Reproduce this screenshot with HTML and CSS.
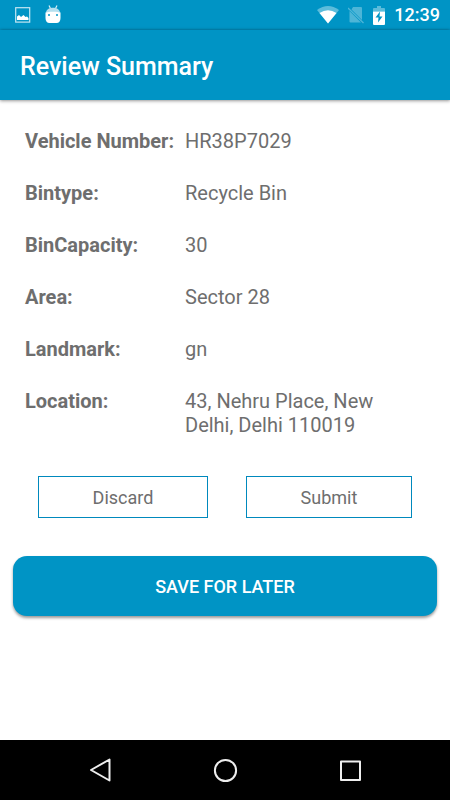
FILE: index.html
```html
<!DOCTYPE html>
<html lang="en">
<head>
    <meta charset="UTF-8">
    <meta name="viewport" content="width=device-width, initial-scale=1.0">
    <title>Review Summary</title>
    <link rel="stylesheet" href="styles.css">
</head>
<body>
    <div class="status-bar">
        <div class="status-left">
            <svg width="16" height="16" viewBox="0 0 16 16">
                <rect x="0.7" y="0.7" width="14" height="14.4" fill="none" stroke="#c4e6f2" stroke-width="1.2"/>
                <path d="M2 13V9.5L4 8l2 2 2.5-2 2 2 1.5-.5 1.5 1.5V13z" fill="#fff"/>
            </svg>
            <svg width="16" height="20" viewBox="0 0 16 20">
                <path d="M4 .5l1.500 3M12 .5l-1.500 3" stroke="#d8eff7" stroke-width="1.2"/>
                <path d="M1 7.500C1.500 4 5 2.800 8 2.800s6.500 1.200 7 4.700z" fill="#b5dfee"/>
                <path d="M.5 7.500C2 6.500 14 6.500 15.500 7.500V13c0 3-1.500 5-4 5h-7c-2.500 0-4-2-4-5z" fill="#fff"/>
                <rect x="3" y="9" width="2" height="2" fill="#3fb0d4"/>
                <rect x="11" y="9" width="2" height="2" fill="#3fb0d4"/>
            </svg>
        </div>
        <div class="status-right">
            <svg width="22" height="18" viewBox="0 0 22 18">
                <path d="M0 4Q11-4 22 4L11 17.5z" fill="#5cbcdb"/>
                <path d="M2.5 7Q11 1.500 19.5 7L11 17.5z" fill="#fff"/>
            </svg>
            <svg width="16" height="18" viewBox="0 0 16 18">
                <path d="M5 1h8q1 0 1 1v12L3.5 3.500zM1.500 5L13 16.500H2.500q-1 0-1-1z" fill="#4db5d7"/>
                <path d="M0 2l15.500 15" stroke="#4db5d7" stroke-width="1.3"/>
            </svg>
            <svg width="12" height="19" viewBox="0 0 12 19">
                <path d="M0 5.500V3q0-1 1-1h3V0h4v2h3q1 0 1 1v2.500z" fill="#5cbcdb"/>
                <path d="M0 5.500h12V18q0 1-1 1H1q-1 0-1-1z" fill="#fff"/>
                <path d="M7 5.500L2.500 11.500H5.500L5 16.500l4.500-6H6.500z" fill="#0094c5"/>
            </svg>
            <span class="clock">12:39</span>
        </div>
    </div>

    <header>
        <h1>Review Summary</h1>
    </header>

    <main>
        <dl class="summary">
            <dt>Vehicle Number:</dt>
            <dd>HR38P7029</dd>
            <dt>Bintype:</dt>
            <dd>Recycle Bin</dd>
            <dt>BinCapacity:</dt>
            <dd>30</dd>
            <dt>Area:</dt>
            <dd>Sector 28</dd>
            <dt>Landmark:</dt>
            <dd>gn</dd>
            <dt>Location:</dt>
            <dd>43, Nehru Place, New Delhi, Delhi 110019</dd>
        </dl>

        <div class="actions">
            <button type="button" class="btn-outline">Discard</button>
            <button type="button" class="btn-outline">Submit</button>
        </div>

        <button type="button" class="btn-save">SAVE FOR LATER</button>
    </main>

    <nav>
        <button type="button" aria-label="Back">
            <svg width="26" height="26" viewBox="0 0 26 26">
                <path d="M22.5 2.500v21L4 13z"/>
            </svg>
        </button>
        <button type="button" aria-label="Home">
            <svg width="26" height="26" viewBox="0 0 26 26">
                <circle cx="13.5" cy="13.5" r="10.6"/>
            </svg>
        </button>
        <button type="button" aria-label="Recent apps">
            <svg width="26" height="26" viewBox="0 0 26 26">
                <rect x="4" y="4.500" width="19" height="18.500"/>
            </svg>
        </button>
    </nav>
</body>
</html>
```
FILE: styles.css
```css
* {
    margin: 0;
    padding: 0;
    box-sizing: border-box;
}
body {
    min-height: 100vh;
    display: flex;
    flex-direction: column;
    font-family: Roboto, sans-serif;
    background-color: #fff;
    color: #6e6e6e;
}
button {
    font-family: inherit;
    cursor: pointer;
}
svg {
    display: block;
}
.status-bar {
    height: 30px;
    padding: 0 10px 0 15px;
    display: flex;
    justify-content: space-between;
    align-items: center;
    background-color: #0094c5;
    color: white;
}
.status-left {
    display: flex;
    align-items: center;
    gap: 14px;
}
.status-right {
    display: flex;
    align-items: center;
    gap: 9px;
}
.clock {
    font-size: 18px;
    font-weight: 500;
    line-height: 30px;
}
header {
    height: 70px;
    padding: 2px 20px 0;
    display: flex;
    align-items: center;
    background-color: #0094c5;
    color: white;
    box-shadow: 0 0 3px rgba(0, 0, 0, 0.4), 0 2px 3px rgba(0, 0, 0, 0.15);
}
header h1 {
    font-size: 25px;
    font-weight: 500;
}
main {
    flex: 1;
    padding: 29px 13px;
}
.summary {
    display: grid;
    grid-template-columns: 160px 1fr;
    row-gap: 28px;
    padding: 0 40px 0 12px;
    font-size: 20px;
    line-height: 24px;
}
.summary dt {
    font-weight: bold;
    white-space: nowrap;
}
.actions {
    display: flex;
    gap: 38px;
    margin: 39px 25px 0;
}
.btn-outline {
    flex: 1 1 auto;
    height: 42px;
    background-color: white;
    border: 1px solid #0089bd;
    color: #6e6e6e;
    font-size: 18px;
}
.btn-save {
    display: block;
    width: 100%;
    height: 60px;
    margin-top: 38px;
    background-color: #0094c5;
    border: none;
    border-radius: 14px;
    color: white;
    font-size: 18px;
    font-weight: 500;
    box-shadow: 0 2px 3px rgba(0, 0, 0, 0.4);
}
nav {
    height: 60px;
    padding: 0 37px;
    display: flex;
    background-color: black;
}
nav button {
    flex: 1;
    display: flex;
    justify-content: center;
    align-items: center;
    background: none;
    border: none;
}
nav svg {
    fill: none;
    stroke: #eee;
    stroke-width: 2;
    stroke-linejoin: round;
}
```
